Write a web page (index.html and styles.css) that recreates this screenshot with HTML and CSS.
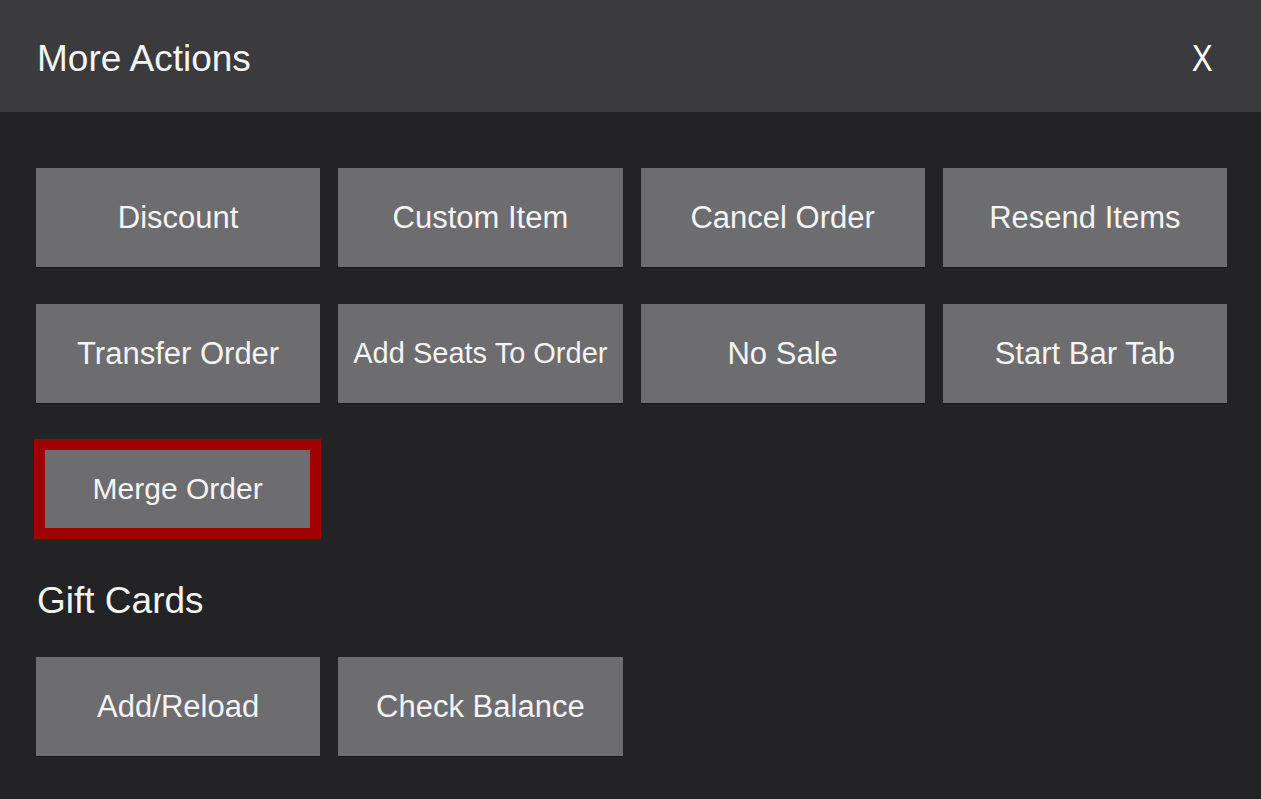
FILE: index.html
```html
<!DOCTYPE html>
<html lang="en">
<head>
<meta charset="utf-8">
<title>More Actions</title>
<link rel="stylesheet" href="styles.css">
</head>
<body>
<div class="sheet">
  <header class="sheet-header">
    <h1 class="sheet-title">More Actions</h1>
    <button class="close-btn" type="button">X</button>
  </header>
  <main class="sheet-body">
    <section class="action-grid">
      <button class="action-btn" type="button">Discount</button>
      <button class="action-btn" type="button">Custom Item</button>
      <button class="action-btn" type="button">Cancel Order</button>
      <button class="action-btn" type="button">Resend Items</button>
      <button class="action-btn" type="button">Transfer Order</button>
      <button class="action-btn action-btn--fit" type="button">Add Seats To Order</button>
      <button class="action-btn" type="button">No Sale</button>
      <button class="action-btn" type="button">Start Bar Tab</button>
      <div class="highlight">
        <button class="action-btn action-btn--inner" type="button">Merge Order</button>
      </div>
    </section>
    <h2 class="section-title">Gift Cards</h2>
    <section class="action-grid">
      <button class="action-btn" type="button">Add/Reload</button>
      <button class="action-btn" type="button">Check Balance</button>
    </section>
  </main>
</div>
</body>
</html>
```

FILE: styles.css
```css
html, body {
  margin: 0;
  padding: 0;
  height: 100%;
}

body {
  background: #232225;
  font-family: "Liberation Sans", Arial, Helvetica, sans-serif;
  color: #f4f4f4;
  overflow: hidden;
}

.sheet {
  display: flex;
  flex-direction: column;
  min-height: 100%;
}

.sheet-header {
  height: 112px;
  box-sizing: border-box;
  background: #3b3a3d;
  display: flex;
  align-items: center;
  justify-content: space-between;
  padding: 6px 46px 0 37px;
}

.sheet-title {
  margin: 0;
  font-size: 37px;
  font-weight: 400;
}

.close-btn {
  background: none;
  border: 0;
  padding: 0;
  color: #ffffff;
  font-family: inherit;
  font-size: 37px;
  font-weight: 400;
  transform: scaleX(0.85);
}

.sheet-body {
  padding: 56px 34px 0 36px;
}

.action-grid {
  width: 1191px;
  display: grid;
  grid-template-columns: repeat(4, 1fr);
  grid-auto-rows: 99px;
  column-gap: 18px;
  row-gap: 37px;
}

.action-btn {
  background: #6d6c6f;
  border: 0;
  margin: 0;
  padding: 0;
  color: #f4f4f4;
  font-family: inherit;
  font-size: 31px;
  font-weight: 400;
  display: flex;
  align-items: center;
  justify-content: center;
  box-shadow: 0 1px 0 rgba(0, 0, 0, 0.35);
  white-space: nowrap;
}

.action-btn--fit {
  font-size: 29px;
}

.highlight {
  margin: -1px -1px 0 -2px;
  border: 11px solid #a00000;
  display: flex;
}

.action-btn--inner {
  flex: 1;
  font-size: 30px;
  box-shadow: none;
}

.section-title {
  margin: 42px 0 36px 1px;
  font-size: 37px;
  line-height: 40px;
  font-weight: 400;
}
```
